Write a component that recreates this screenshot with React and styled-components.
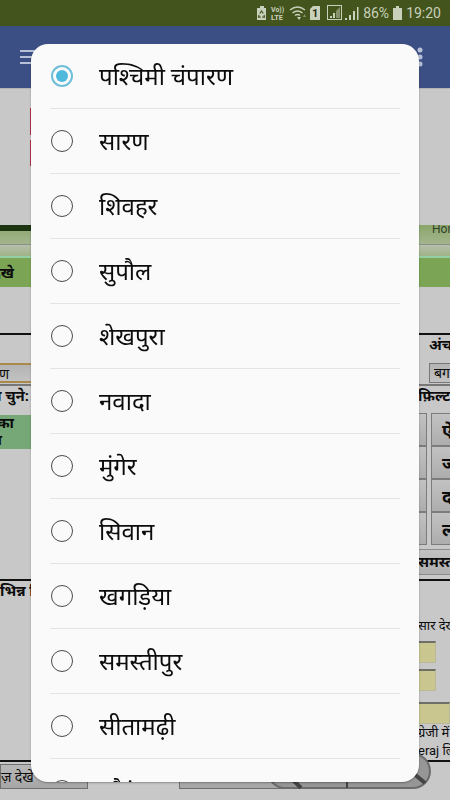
import { useState } from 'react';
import styled, { createGlobalStyle, css } from 'styled-components';

const DISTRICTS = [
  'पश्चिमी चंपारण',
  'सारण',
  'शिवहर',
  'सुपौल',
  'शेखपुरा',
  'नवादा',
  'मुंगेर',
  'सिवान',
  'खगड़िया',
  'समस्तीपुर',
  'सीतामढ़ी',
  'औरंगाबाद',
];

const LETTERS = ['ऐ', 'ज', 'द', 'ल'];

const App = () => {
  const [district, setDistrict] = useState(DISTRICTS[0]);

  return (
    <>
      <GlobalStyle />
      <Screen>
        <StatusBar />
        <AppBar>
          <IconButton aria-label="Menu">
            <svg width="20" height="16" viewBox="0 0 20 16" fill="#b7c0d6">
              <rect y="1" width="20" height="2" />
              <rect y="7" width="20" height="2" />
              <rect y="13" width="20" height="2" />
            </svg>
          </IconButton>
          <IconButton aria-label="More">
            <svg width="6" height="20" viewBox="0 0 6 20" fill="#b7c0d6">
              <circle cx="3" cy="3" r="2.5" />
              <circle cx="3" cy="10" r="2.5" />
              <circle cx="3" cy="17" r="2.5" />
            </svg>
          </IconButton>
        </AppBar>
        <WebPage />
      </Screen>
      <Overlay>
        <Dialog role="dialog" aria-modal="true">
          <OptionList>
            {DISTRICTS.map((name) => (
              <Option key={name}>
                <Radio
                  type="radio"
                  name="district"
                  checked={district === name}
                  onChange={() => setDistrict(name)}
                />
                <OptionText>{name}</OptionText>
              </Option>
            ))}
          </OptionList>
        </Dialog>
      </Overlay>
    </>
  );
};

const StatusBar = () => (
  <StatusWrapper>
    <svg width="103" height="18" viewBox="0 0 103 18" fill="#c9d0bb">
      {/* battery saver */}
      <path d="M4 2h4v2h2v12H1V4h3z" />
      <path
        d="M3.800 9.500L5.500 7l1.700 2.500M8 11l.5 2.200H6.300M4.700 13.200H2.500L3 11"
        stroke="#43541d"
        strokeWidth="1.2"
        fill="none"
      />
      {/* volte */}
      <text x="15" y="8" fontSize="7" fontWeight="700">
        Vo))
      </text>
      <text x="15" y="16" fontSize="7.500" fontWeight="700">
        LTE
      </text>
      {/* wifi */}
      <g fill="none" stroke="#c9d0bb" strokeWidth="1.500">
        <path d="M34 6q7.500-6 15 0" />
        <path d="M36.500 9q5-4 10 0" />
        <path d="M39 11.500q2.500-2 5 0" />
      </g>
      <path d="M41 13h4l-2 3z" />
      <path d="M47 13l1.500-3 1.500 3z" opacity="0.5" />
      {/* sim */}
      <path d="M57 2h7v14H54V5z" />
      <text x="56" y="13" fontSize="11" fontWeight="700" fill="#263010">
        1
      </text>
      {/* first signal */}
      <rect
        x="71.500"
        y="1.500"
        width="14"
        height="14"
        fill="none"
        stroke="#c9d0bb"
      />
      <path d="M84 3v11h-4V7z" opacity="0.5" />
      <path d="M77 9h2v5h-2zM74 12h2v2h-2z" />
      {/* second signal */}
      <path d="M89 14h2v2h-2zM93 11h2v5h-2zM97 7h2v9h-2zM101 3h1.500v13H101z" />
    </svg>
    <StatusText>86%</StatusText>
    <svg width="9" height="14" viewBox="0 0 9 14" fill="#c9d0bb">
      <path d="M3 0h3v2h3v12H0V2h3z" />
    </svg>
    <StatusText>19:20</StatusText>
  </StatusWrapper>
);

const WebPage = () => (
  <Page>
    <BannerArea>
      <Banner />
    </BannerArea>
    <Nav>
      <NavTrees />
      <NavLink href="#home">Home</NavLink>
    </Nav>
    <NavEdge />
    <TitleBar>
      <Edge>
        <Label $end={17}>देखे</Label>
      </Edge>
    </TitleBar>
    <Gap />
    <Section>
      <Split>
        <Edge $top={28}>
          <LeftSelect>ण</LeftSelect>
        </Edge>
        <RightEdge>
          <Label $inset={11}>अंचल</Label>
          <CircleSelect>बगहा</CircleSelect>
        </RightEdge>
      </Split>
    </Section>
    <Section $light>
      <Split>
        <Edge>
          <Label $end={2}>नाम चुने:</Label>
          <GreenCell>
            <CellLine $end={17}>का</CellLine>
            <CellLine $end={29}>या</CellLine>
          </GreenCell>
        </Edge>
        <RightEdge>
          <Label>फ़िल्टर</Label>
          <LetterGrid>
            {LETTERS.map((letter) => (
              <LetterRow key={letter}>
                <LetterButton aria-label="Letter" $narrow />
                <LetterButton>{letter}</LetterButton>
              </LetterRow>
            ))}
          </LetterGrid>
          <AllButton>समस्त</AllButton>
        </RightEdge>
      </Split>
    </Section>
    <Section>
      <Split>
        <Edge $start>
          <Label>भिन्न विवरण</Label>
        </Edge>
        <RightEdge $top={36}>
          <Plain>सार देखे</Plain>
          <Field aria-label="Khata" $short />
          <Field aria-label="Khesra" $short />
          <Field aria-label="Name" $last />
          <Plain>ग्रेजी में</Plain>
          <Plain>eraj लिखे</Plain>
        </RightEdge>
      </Split>
    </Section>
    <Footer>
      <FooterButton>ज़ देखे</FooterButton>
      <FooterButton $wide aria-label="Reset" />
      <Zoom>
        <svg width="164" height="36" viewBox="0 0 164 36">
          <rect
            x="1"
            y="1"
            width="162"
            height="34"
            rx="17"
            fill="#969696"
            stroke="#6c6c6c"
            strokeWidth="2"
          />
          <path d="M80 1v34" stroke="#444" strokeWidth="2" />
          <path d="M22 23l12 12M146 20l12 10" stroke="#444" strokeWidth="4" />
        </svg>
      </Zoom>
    </Footer>
  </Page>
);

export default App;

const GlobalStyle = createGlobalStyle`
  * {
    box-sizing: border-box;
  }
  body {
    margin: 0;
    background-color: #c8c8c8;
    font-family: Roboto, 'Noto Sans', 'Noto Sans Devanagari', sans-serif;
    color: #0c0c0c;
    overflow: hidden;
  }
  button, input {
    font-family: inherit;
    color: inherit;
    margin: 0;
  }
`;

const Screen = styled.div`
  height: 100vh;
  overflow: hidden;
`;

const StatusWrapper = styled.header`
  display: flex;
  align-items: center;
  justify-content: flex-end;
  gap: 4px;
  height: 26px;
  padding-right: 9px;
  background-color: #43541d;
`;

const StatusText = styled.span`
  font-size: 14px;
  color: #c9d0bb;
`;

const AppBar = styled.nav`
  display: flex;
  align-items: center;
  justify-content: space-between;
  height: 62px;
  padding: 0 27px 0 20px;
  background-color: #3c4f84;
`;

const IconButton = styled.button`
  display: flex;
  padding: 0;
  border: none;
  background: none;
`;

const Page = styled.main`
  background-color: #c8c8c8;
`;

const BannerArea = styled.div`
  height: 137px;
  padding: 19px 31px 19px 30px;
  border-top: 1px solid #b4b4b8;
`;

const Banner = styled.div`
  height: 58px;
  background: linear-gradient(
    #b5354a 27px,
    #c8c8c8 27px,
    #c8c8c8 32px,
    #b5354a 32px
  );
`;

const Nav = styled.div`
  display: flex;
  justify-content: space-between;
  height: 20px;
  overflow: hidden;
  border-bottom: 1px solid #87908a;
  background: linear-gradient(#8aa66a, #a4b58e);
`;

const NavTrees = styled.div`
  width: 31px;
  height: 6px;
  background-color: #1c3510;
`;

const NavLink = styled.a`
  width: 18px;
  font-size: 12px;
  line-height: 8px;
  color: #33402a;
  text-decoration: none;
`;

const NavEdge = styled.div`
  height: 13px;
  border-bottom: 2px solid #93cfa5;
  background: linear-gradient(#b7bfaa, #9fb487);
`;

const TitleBar = styled.div`
  display: flex;
  align-items: center;
  height: 29px;
  background-color: #7ba555;
`;

const Gap = styled.div`
  height: 46px;
`;

const Section = styled.section`
  border-top: ${({ $light }) =>
    $light ? '2px solid #777777' : '2px solid #111111'};
`;

const Split = styled.div`
  display: flex;
  justify-content: space-between;
`;

const Edge = styled.div`
  display: flex;
  flex-direction: column;
  align-items: ${({ $start }) => ($start ? 'flex-start' : 'flex-end')};
  width: 31px;
  padding-top: ${({ $top = 0 }) => $top}px;
  overflow: hidden;
`;

const RightEdge = styled.div`
  width: 32px;
  padding-top: ${({ $top = 0 }) => $top}px;
  overflow: hidden;
`;

const Label = styled.div`
  padding-left: ${({ $inset = 0 }) => $inset}px;
  padding-right: ${({ $end = 0 }) => $end}px;
  font-size: 15px;
  font-weight: 700;
  line-height: 20px;
  white-space: nowrap;
`;

const selectBox = css`
  height: 20px;
  padding: 0 4px;
  border: 1px solid #777777;
  background: linear-gradient(#b4b4b4, #c2c2c2);
  font-size: 14px;
  line-height: 18px;
  white-space: nowrap;
`;

const LeftSelect = styled.button`
  ${selectBox}
  width: 60px;
  padding-right: 22px;
  text-align: right;
  border: 2px solid #a98a4c;
  border-right: none;
`;

const CircleSelect = styled.button`
  ${selectBox}
  margin: 8px 0 1px 11px;
`;

const GreenCell = styled.div`
  display: flex;
  flex-direction: column;
  align-items: flex-end;
  width: 31px;
  margin-top: 9px;
  background-color: #76a877;
`;

const CellLine = styled.span`
  padding-right: ${({ $end }) => $end}px;
  font-size: 15px;
  font-weight: 700;
  line-height: 17px;
`;

const LetterGrid = styled.div`
  display: flex;
  flex-direction: column;
  padding-top: 7px;
`;

const LetterRow = styled.div`
  display: flex;
  gap: 4px;
`;

const LetterButton = styled.button`
  flex: none;
  width: ${({ $narrow }) => ($narrow ? 9 : 60)}px;
  height: 33px;
  padding: 0 0 0 ${({ $narrow }) => ($narrow ? 0 : 10)}px;
  border: 1px solid #7c7c7c;
  border-left-width: ${({ $narrow }) => ($narrow ? 0 : 1)}px;
  background: linear-gradient(#c2c2c2, #adadad);
  font-size: 18px;
  font-weight: 700;
  text-align: left;
`;

const AllButton = styled.button`
  width: 80px;
  height: 26px;
  margin: 4px 0;
  padding: 0;
  border: 1px solid #8c8c8c;
  border-width: 1px 0;
  background: linear-gradient(#c2c2c2, #b0b0b0);
  font-size: 15px;
  font-weight: 700;
  line-height: 20px;
  text-align: left;
  white-space: nowrap;
`;

const Plain = styled.div`
  font-size: 13px;
  line-height: 18px;
  white-space: nowrap;
`;

const Field = styled.input`
  display: block;
  width: ${({ $short }) => ($short ? '18px' : '100%')};
  height: 22px;
  margin: ${({ $last }) => ($last ? '11px 0 0' : '6px 0 0')};
  padding: 0;
  border: 1px solid #b9b99a;
  border-top: 2px solid #6f6f68;
  border-left: none;
  background-color: #c9c78f;
`;

const Footer = styled.footer`
  display: flex;
  position: relative;
  padding-top: 2px;
  border-top: 2px solid #111111;
`;

const FooterButton = styled.button`
  width: ${({ $wide }) => ($wide ? 160 : 88)}px;
  height: 25px;
  margin-left: ${({ $wide }) => ($wide ? 91 : 0)}px;
  padding: 0;
  border: 1px solid #6f6f6f;
  background: linear-gradient(#b8b8b8, #a6a6a6);
  font-size: 14px;
  line-height: 18px;
  text-align: left;
`;

/* floats over the page */
const Zoom = styled.div`
  position: absolute;
  right: 19px;
  bottom: 0;
  display: flex;
`;

const Overlay = styled.div`
  position: fixed;
  inset: 0;
  display: flex;
  padding: 44px 31px 18px;
`;

const Dialog = styled.div`
  flex: 1;
  padding: 0 19px;
  border-radius: 17px;
  background-color: #fafafa;
  box-shadow: 0 1px 2px rgba(0, 0, 0, 0.3);
  overflow: hidden;
`;

const OptionList = styled.div`
  display: flex;
  flex-direction: column;
`;

const Option = styled.label`
  display: flex;
  align-items: center;
  flex: none;
  gap: 26px;
  height: 65px;
  padding-left: 1px;
  border-bottom: 1px solid #e4e4e4;
`;

const Radio = styled.input`
  appearance: none;
  display: grid;
  place-items: center;
  width: 22px;
  height: 22px;
  border: 1px solid #4a4a4a;
  border-radius: 50%;

  &:checked {
    border: 2px solid #6fbfd8;
  }
  &:checked::before {
    content: '';
    width: 12px;
    height: 12px;
    border-radius: 50%;
    background-color: #4fb9dd;
  }
`;

const OptionText = styled.span`
  padding-top: 2px;
  font-size: 24px;
  line-height: 32px;
`;
